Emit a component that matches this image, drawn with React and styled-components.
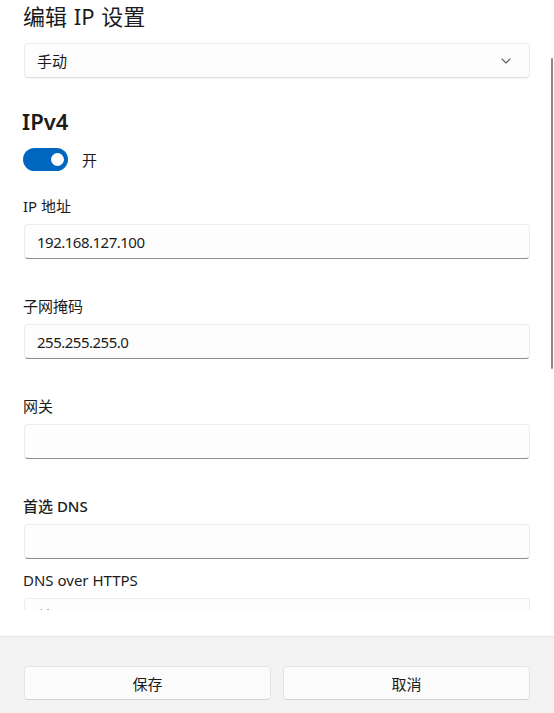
import React from "react";
import styled, { createGlobalStyle } from "styled-components";

const Global = createGlobalStyle`
  html, body { margin: 0; padding: 0; background: #ffffff; }
  body { font-family: "Noto Sans", "Noto Sans CJK SC", sans-serif; color: #1b1b1b; }
  * { box-sizing: border-box; }
`;

const Dialog = styled.div`
  position: relative;
  width: 554px;
  height: 713px;
  display: flex;
  flex-direction: column;
  background: #ffffff;
  overflow: hidden;
`;

const ScrollArea = styled.div`
  height: 610px;
  overflow: hidden;
  padding: 0 24px 0 24px;
  display: flex;
  flex-direction: column;
  flex-shrink: 0;
  & > * { flex-shrink: 0; }
`;

const ScrollThumb = styled.div`
  position: absolute;
  left: 551px;
  top: 58px;
  width: 2px;
  height: 311px;
  border-radius: 1px;
  background: #8a8a8a;
`;

const Title = styled.h1`
  margin: 0 0 11px -1px;
  font-size: 22px;
  line-height: 32px;
  font-weight: 400;
  color: #1b1b1b;
  word-spacing: 1px;
`;

const Select = styled.div`
  height: 35px;
  display: flex;
  align-items: center;
  justify-content: space-between;
  padding: 0 18px 0 12px;
  background: #fdfdfd;
  border: 1px solid #ececec;
  border-bottom-color: #e0e0e0;
  border-radius: 4px;
  box-shadow: 0 1px 1px rgba(0, 0, 0, 0.04);
  font-size: 15px;
`;

const Section = styled.h2`
  margin: 29px 0 13px -2px;
  font-size: 22px;
  line-height: 28px;
  font-weight: 600;
  color: #1b1b1b;
`;

const ToggleRow = styled.div`
  display: flex;
  align-items: center;
  gap: 14px;
  margin-left: -1px;
  height: 23px;
  font-size: 15px;
`;

const Toggle = styled.div`
  position: relative;
  width: 45px;
  height: 23px;
  border-radius: 12px;
  background: ${(p) => (p.$on ? "#0067c0" : "#ffffff")};
  &::after {
    content: "";
    position: absolute;
    top: 5px;
    left: ${(p) => (p.$on ? "28px" : "5px")};
    width: 13px;
    height: 13px;
    border-radius: 50%;
    background: #ffffff;
  }
`;

const Field = styled.div`
  display: flex;
  flex-direction: column;
  margin-top: ${(p) => p.$top}px;
`;

const Label = styled.div`
  font-size: 15px;
  line-height: 20px;
  margin: 0 0 8px -1px;
  font-weight: ${(p) => (p.$strong ? 500 : 400)};
  color: #1b1b1b;
`;

const Input = styled.div`
  height: 35px;
  display: flex;
  align-items: center;
  padding: 0 12px;
  background: #fdfdfd;
  border: 1px solid #ececec;
  border-bottom: 1px solid #8d8d8d;
  border-radius: 4px;
  font-size: 15px;
  letter-spacing: -0.5px;
  color: #1b1b1b;
  flex-shrink: 0;
`;

const PlainInput = styled(Input)`
  border-bottom-color: #e6e6e6;
  padding-bottom: 1px;
`;

const Footer = styled.div`
  margin-top: 26px;
  flex: 1;
  background: #f3f3f3;
  border-top: 1px solid #e5e5e5;
  display: grid;
  grid-template-columns: 1fr 1fr;
  gap: 12px;
  padding: 29px 24px 0 24px;
  align-content: start;
`;

const Button = styled.div`
  height: 34px;
  display: flex;
  align-items: center;
  justify-content: center;
  background: #fbfbfb;
  border: 1px solid #e5e5e5;
  border-bottom-color: #d4d4d4;
  border-radius: 4px;
  font-size: 15px;
  color: #1b1b1b;
`;

const Chevron = () => (
  <svg width="10" height="6" viewBox="0 0 10 6" fill="none">
    <path d="M1 1l4 4 4-4" stroke="#5c5c5c" strokeWidth="1.1" strokeLinecap="round" strokeLinejoin="round" />
  </svg>
);

export default function App() {
  return (
    <>
      <Global />
      <Dialog>
        <ScrollArea>
          <Title>编辑 IP 设置</Title>
          <Select>
            <span>手动</span>
            <Chevron />
          </Select>
          <Section>IPv4</Section>
          <ToggleRow>
            <Toggle $on />
            <span>开</span>
          </ToggleRow>
          <Field $top={25}>
            <Label>IP 地址</Label>
            <Input>192.168.127.100</Input>
          </Field>
          <Field $top={37}>
            <Label>子网掩码</Label>
            <Input>255.255.255.0</Input>
          </Field>
          <Field $top={37}>
            <Label>网关</Label>
            <Input />
          </Field>
          <Field $top={37}>
            <Label $strong>首选 DNS</Label>
            <Input />
          </Field>
          <Field $top={11}>
            <Label>DNS over HTTPS</Label>
            <PlainInput>关</PlainInput>
          </Field>
        </ScrollArea>
        <ScrollThumb />
        <Footer>
          <Button>保存</Button>
          <Button>取消</Button>
        </Footer>
      </Dialog>
    </>
  );
}
